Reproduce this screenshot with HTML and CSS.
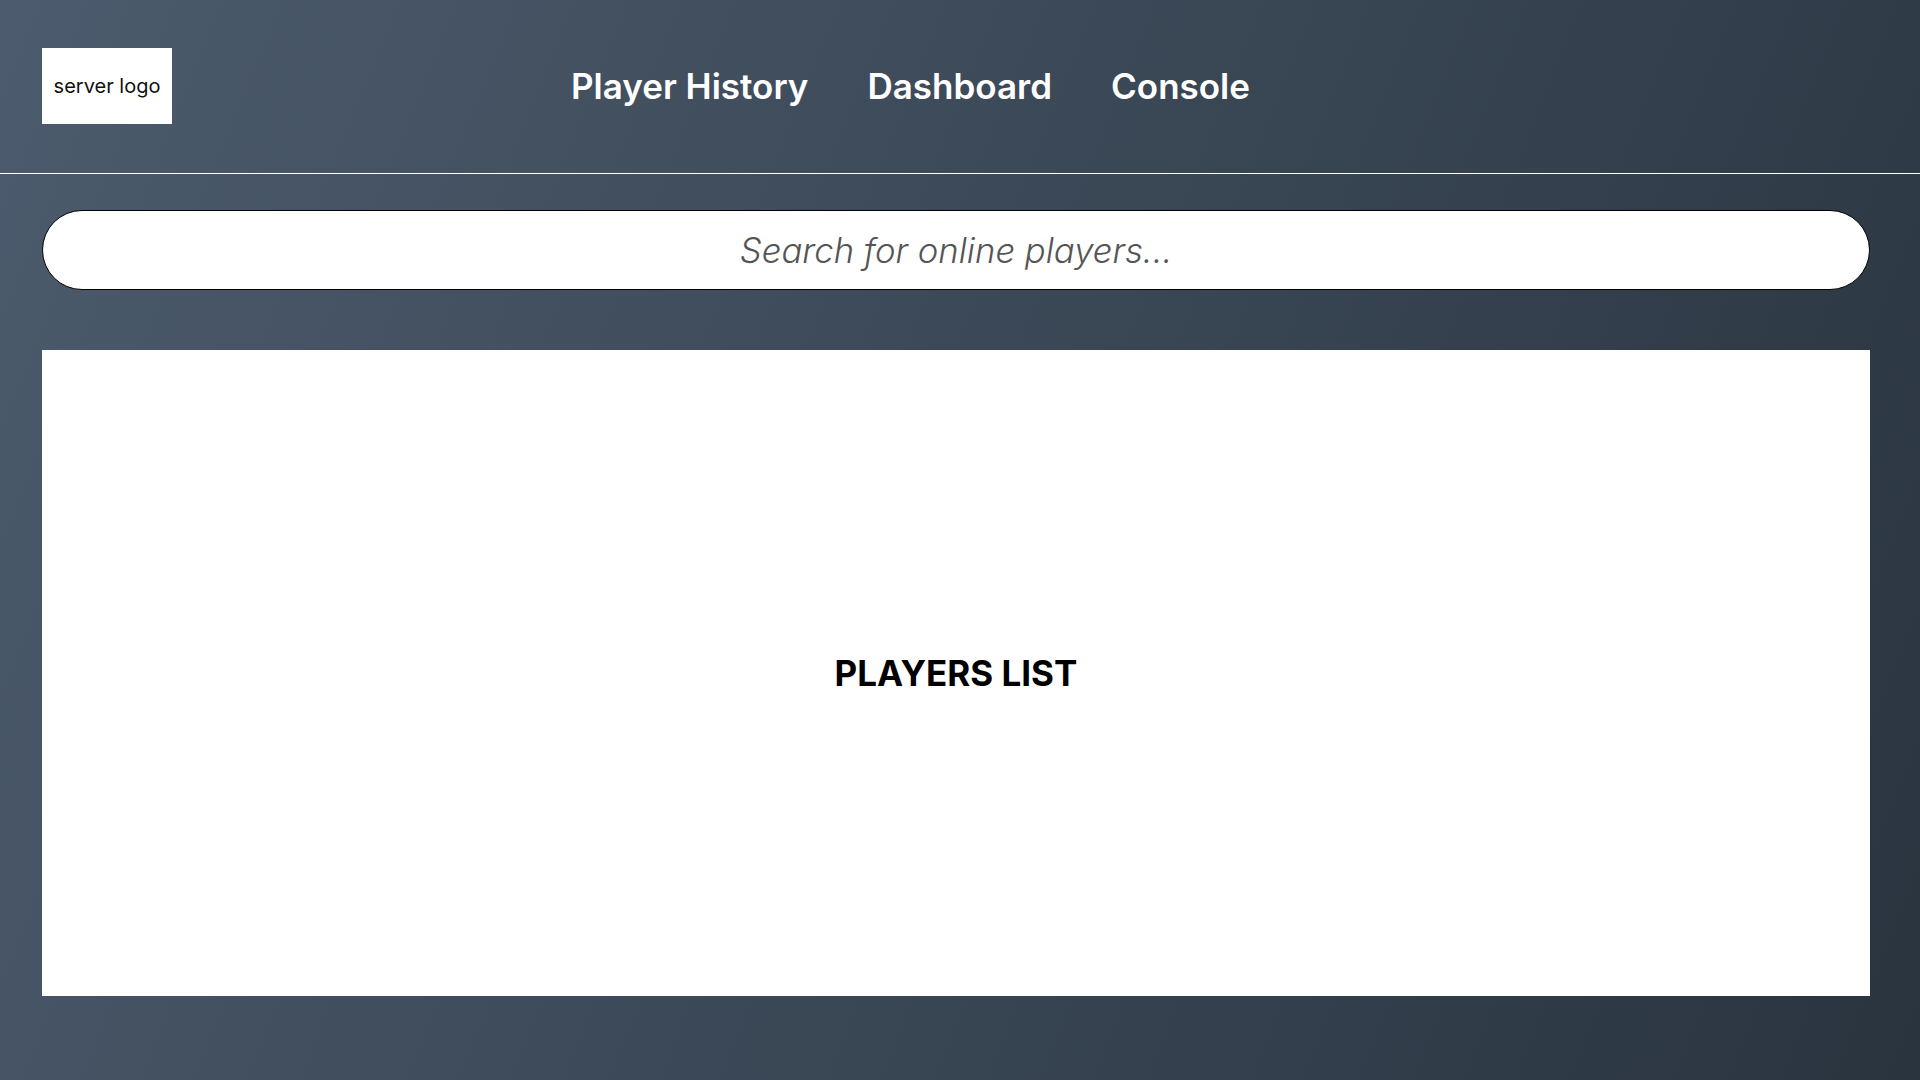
FILE: index.html
```html
<!DOCTYPE html>
<html lang="en">
<head>
<meta charset="utf-8">
<title>Server Panel</title>
<link rel="stylesheet" href="styles.css">
</head>
<body>
<header class="header">
  <div class="logo">server logo</div>
  <nav class="nav">
    <a class="nav-link" href="#">Player History</a>
    <a class="nav-link" href="#">Dashboard</a>
    <a class="nav-link" href="#">Console</a>
  </nav>
</header>
<main class="main">
  <input class="search" type="text" placeholder="Search for online players...">
  <section class="players">
    <h2 class="players-title">PLAYERS LIST</h2>
  </section>
</main>
</body>
</html>
```
FILE: styles.css
```css
* { box-sizing: border-box; }
html, body { margin: 0; padding: 0; }
body {
  min-height: 100vh;
  font-family: Inter, "Noto Sans", sans-serif;
  background: linear-gradient(112deg, #4c5b6d 0%, #29343f 100%);
  background-attachment: fixed;
}
.header {
  height: 174px;
  display: flex;
  align-items: center;
  padding-left: 42px;
  padding-bottom: 1px;
  border-bottom: 1px solid #ffffff;
}
.logo {
  width: 130px;
  height: 76px;
  background: #ffffff;
  color: #111;
  font-size: 20px;
  display: flex;
  align-items: center;
  justify-content: center;
}
.nav {
  display: flex;
  gap: 59px;
  margin-left: 399px;
}
.nav-link {
  color: #ffffff;
  text-decoration: none;
  font-size: 35px;
  font-weight: 600;
}
.main {
  padding: 36px 50px 84px 42px;
  display: flex;
  flex-direction: column;
}
.search {
  height: 80px;
  width: 100%;
  border: 1px solid #000;
  border-radius: 40px;
  background: #fff;
  font-family: Inter, sans-serif;
  font-size: 34.7px;
  font-style: italic;
  font-weight: 300;
  text-align: center;
  outline: none;
}
.search::placeholder { color: #555; }
.players {
  margin-top: 60px;
  height: 646px;
  background: #fff;
  display: flex;
  align-items: center;
  justify-content: center;
}
.players-title {
  margin: 0;
  font-size: 35px;
  font-weight: 700;
  color: #000;
}
```
